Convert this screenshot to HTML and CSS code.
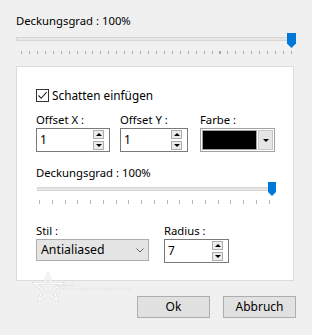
FILE: index.html
```html
<!DOCTYPE html>
<html>
<head>
<meta charset="utf-8">
<link rel="stylesheet" href="styles.css">
</head>
<body>
<div class="dialog">
  <div class="top">
    <div class="label l1">Deckungsgrad : 100%</div>
    <div class="slider s1">
      <div class="track"></div>
      <svg class="thumb" width="9" height="15" viewBox="0 0 9 15"><path d="M0 0H9V10.5L4.5 15L0 10.5Z" fill="#0078d7"/></svg>
      <div class="ticks"></div>
    </div>
  </div>

  <div class="panel">
    <div class="check-row">
      <span class="checkbox"><svg width="11" height="11" viewBox="0 0 11 11"><path d="M1.5 5.5L4.2 8.3L9.6 2.2" fill="none" stroke="#222" stroke-width="1.1"/></svg></span>
      <span class="check-label">Schatten einfügen</span>
    </div>

    <div class="row r1">
      <div class="field fx">
        <div class="label">Offset X :</div>
        <div class="spin w74">
          <span class="val">1</span>
          <span class="arrows">
            <span class="abtn"><span class="tri up"></span></span>
            <span class="abtn"><span class="tri down"></span></span>
          </span>
        </div>
      </div>
      <div class="field fy">
        <div class="label">Offset Y :</div>
        <div class="spin w68">
          <span class="val">1</span>
          <span class="arrows">
            <span class="abtn"><span class="tri up"></span></span>
            <span class="abtn"><span class="tri down"></span></span>
          </span>
        </div>
      </div>
      <div class="field">
        <div class="label">Farbe :</div>
        <div class="color">
          <span class="swatch"></span>
          <span class="cbtn"><span class="tri down"></span></span>
        </div>
      </div>
    </div>

    <div class="label l2">Deckungsgrad : 100%</div>
    <div class="slider s2">
      <div class="track"></div>
      <svg class="thumb" width="8" height="14" viewBox="0 0 8 14"><path d="M0 0H8V10L4 14L0 10Z" fill="#0078d7"/></svg>
      <div class="ticks"></div>
    </div>

    <div class="row r2">
      <div class="field fs">
        <div class="label">Stil :</div>
        <div class="combo">
          <span class="val">Antialiased</span>
          <svg class="chev" width="8" height="5" viewBox="0 0 8 5"><path d="M0.5 0.5L4 4L7.5 0.5" fill="none" stroke="#606060" stroke-width="1"/></svg>
        </div>
      </div>
      <div class="field">
        <div class="label">Radius :</div>
        <div class="spin w65">
          <span class="val">7</span>
          <span class="arrows">
            <span class="abtn"><span class="tri up"></span></span>
            <span class="abtn"><span class="tri down"></span></span>
          </span>
        </div>
      </div>
    </div>
  </div>

  <div class="footer">
    <svg class="mark" width="100" height="30" viewBox="0 0 100 30">
      <path d="M16 2L19.6 11.5H30L21.8 17.6L25 28L16 21.6L7 28L10.2 17.6L2 11.5H12.4Z" fill="none" stroke="#d8d8d8" stroke-width="2.4"/>
      <path d="M16 2L19.6 11.5H30L21.8 17.6L25 28L16 21.6L7 28L10.2 17.6L2 11.5H12.4Z" fill="none" stroke="#fff" stroke-width="1.3"/>
      <path d="M24 13.5H42" stroke="#e6e6e6" stroke-width="1.5"/>
      <path d="M27 17H98" stroke="#e2e2e2" stroke-width="1.2" stroke-dasharray="2 1"/>
    </svg>
    <div class="buttons">
      <div class="btn">Ok</div>
      <div class="btn">Abbruch</div>
    </div>
  </div>
</div>
</body>
</html>
```
FILE: styles.css
```css
html, body {
  margin: 0;
  padding: 0;
}
body {
  background: #f0f0f0;
  font-family: "Noto Sans", "Liberation Sans", sans-serif;
  font-size: 11.3px;
  color: #000;
  width: 312px;
  height: 335px;
  overflow: hidden;
}
.dialog {
  display: flex;
  flex-direction: column;
  padding: 13px 0 0 16px;
}
.label {
  line-height: 16px;
  height: 16px;
  white-space: nowrap;
}
.slider {
  position: relative;
}
.s1 {
  width: 279px;
  height: 24px;
  margin-top: 4px;
}
.track {
  position: absolute;
  left: 0;
  right: 0;
  height: 2px;
  background: #e7e7e7;
  border: 1px solid #d6d6d6;
}
.s1 .track { top: 4px; right: 4px; }
.thumb {
  position: absolute;
}
.s1 .thumb { top: 0; left: 271px; }
.ticks {
  position: absolute;
  height: 3px;
  background: repeating-linear-gradient(to right, #a8a8a8 0, #a8a8a8 1px, transparent 1px, transparent 7.94px);
}
.s1 .ticks { top: 18px; left: 5px; width: 272px; }

.panel {
  margin-top: 9px;
  height: 213px;
  background: #fff;
  border: 1px solid #dcdcdc;
  padding-left: 19px;
  box-sizing: content-box;
  width: 257px;
  display: flex;
  flex-direction: column;
}
.check-row {
  display: flex;
  align-items: center;
  margin-top: 21px;
  height: 14px;
}
.checkbox {
  width: 11px;
  height: 11px;
  border: 1px solid #333;
  display: flex;
  align-items: center;
  justify-content: center;
  margin-right: 3px;
}
.check-label { line-height: 16px; font-size: 11.8px; }

.row { display: flex; }
.r1 { margin-top: 10px; }
.fx { margin-right: 10px; }
.fy { margin-right: 12px; }

.spin {
  height: 22px;
  border: 1px solid #7a7a7a;
  background: #fff;
  display: flex;
  align-items: center;
  justify-content: space-between;
  box-sizing: content-box;
}
.w74 { width: 72px; }
.w68 { width: 66px; }
.w65 { width: 63px; }
.spin .val { padding-left: 3px; line-height: 16px; font-size: 12px; }
.arrows {
  display: flex;
  flex-direction: column;
  gap: 2px;
  margin-right: 5px;
}
.abtn {
  width: 9px;
  height: 7px;
  border: 1px solid #adadad;
  background: #ececec;
  display: flex;
  align-items: center;
  justify-content: center;
}
.tri {
  width: 0;
  height: 0;
  border-left: 3px solid transparent;
  border-right: 3px solid transparent;
}
.tri.up { border-bottom: 3px solid #000; }
.tri.down { border-top: 3px solid #000; }

.color {
  width: 71px;
  height: 20px;
  border: 1px solid #a0a0a0;
  display: flex;
  padding: 1px;
  gap: 1px;
  background: #fff;
}
.swatch {
  width: 55px;
  background: #000;
  border: 1px solid #a0a0a0;
  box-sizing: border-box;
}
.cbtn {
  flex: 1;
  background: #e5e5e5;
  border: 1px solid #c6c6c6;
  display: flex;
  align-items: center;
  justify-content: center;
}

.l2 { margin-top: 13px; }
.s2 {
  width: 240px;
  height: 23px;
  margin-top: 1px;
}
.s2 .track { top: 5px; left: 1px; right: 0; }
.s2 .thumb { top: 0; left: 232px; }
.s2 .ticks {
  top: 18px;
  left: 3px;
  width: 234px;
  height: 4px;
  background: repeating-linear-gradient(to right, #b4b4b4 0, #b4b4b4 1px, transparent 1px, transparent 12.76px);
}

.r2 { margin-top: 18px; }
.fs { margin-right: 15px; }
.combo {
  height: 20px;
  border: 1px solid #adadad;
  background: #e5e5e5;
  display: flex;
  align-items: center;
  justify-content: space-between;
  padding-left: 4px;
  box-sizing: content-box;
  width: 107px;
}
.combo .val { line-height: 16px; font-size: 12.3px; }
.chev { margin-right: 4px; }

.footer {
  position: relative;
  display: flex;
  justify-content: flex-end;
  width: 280px;
  margin-top: 15px;
}
.mark {
  position: absolute;
  left: 16px;
  top: -24px;
}
.buttons {
  display: flex;
  gap: 13px;
}
.btn {
  width: 71px;
  height: 20px;
  border: 1px solid #adadad;
  background: #e1e1e1;
  display: flex;
  align-items: center;
  justify-content: center;
  line-height: 16px;
  font-size: 12px;
}
```
